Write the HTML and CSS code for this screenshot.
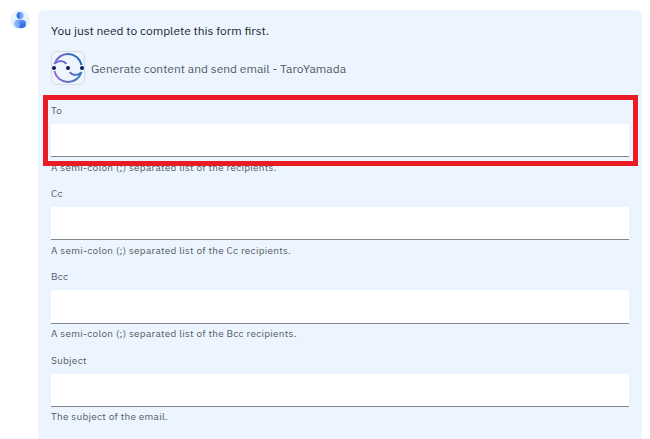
FILE: index.html
```html
<!DOCTYPE html>
<html lang="en">
<head>
<meta charset="utf-8">
<title>Send email</title>
<link rel="stylesheet" href="styles.css">
</head>
<body>
<main class="chat">
  <svg class="avatar" viewBox="0 0 20 20" aria-hidden="true">
    <defs>
      <linearGradient id="light" x1="0" x2="1" y1="0" y2="0"><stop offset="0" stop-color="#a5c8fb"/><stop offset="1" stop-color="#5f98f2"/></linearGradient>
      <linearGradient id="dark" x1="0" x2="0" y1="0" y2="1"><stop offset="0" stop-color="#5b94ef"/><stop offset="1" stop-color="#2460dc"/></linearGradient>
    </defs>
    <circle cx="10" cy="10" r="10" fill="#e9f3ff"/>
    <path fill="#3c78dd" d="M10 2A3.500 3.500 0 0 0 10 9Z"/>
    <path fill="#76a8f5" d="M10 2A3.500 3.500 0 0 1 10 9Z"/>
    <path fill="url(#light)" d="M10 9.800H8A4 4 0 0 0 8 17.900H10Z"/>
    <path fill="url(#dark)" d="M10 9.800H12A4 4 0 0 1 12 17.900H10Z"/>
  </svg>
  <section class="card">
    <p class="intro">You just need to complete this form first.</p>
    <header class="skill">
      <svg class="skill-icon" viewBox="0 0 34 34" aria-hidden="true">
        <defs>
          <linearGradient id="top" x1="0" x2="1" y1="0" y2="0"><stop offset="0" stop-color="#7868d5"/><stop offset="1" stop-color="#1767b5"/></linearGradient>
          <linearGradient id="bottom" x1="0" x2="1" y1="0" y2="0"><stop offset="0" stop-color="#8d65d6"/><stop offset="1" stop-color="#3976be"/></linearGradient>
        </defs>
        <rect x=".5" y=".5" width="33" height="33" rx="4.500" fill="#eff5fc" stroke="#d4dde6"/>
        <g fill="none" stroke-width="1.900">
          <path stroke="url(#top)" d="M3.500 13A14 14 0 0 1 30.600 14M3.500 13C6 9.500 12.200 8.800 15.300 12.800"/>
          <path stroke="url(#bottom)" d="M3.400 20A14 14 0 0 0 30.500 21M30.500 21C28 24.500 21.800 25.200 18.700 21.200"/>
        </g>
        <g fill="#081b5a"><circle cx="3" cy="17" r="2"/><circle cx="17" cy="17" r="2"/><circle cx="31" cy="17" r="2"/></g>
      </svg>
      <h1 class="skill-name">Generate content and send email - TaroYamada</h1>
    </header>
    <form class="fields">
      <div class="field highlighted">
        <label class="label" for="to">To</label>
        <input class="input" id="to" type="text">
        <p class="help">A semi-colon (;) separated list of the recipients.</p>
      </div>
      <div class="field">
        <label class="label" for="cc">Cc</label>
        <input class="input" id="cc" type="text">
        <p class="help">A semi-colon (;) separated list of the Cc recipients.</p>
      </div>
      <div class="field">
        <label class="label" for="bcc">Bcc</label>
        <input class="input" id="bcc" type="text">
        <p class="help">A semi-colon (;) separated list of the Bcc recipients.</p>
      </div>
      <div class="field">
        <label class="label" for="subject">Subject</label>
        <input class="input" id="subject" type="text">
        <p class="help">The subject of the email.</p>
      </div>
    </form>
  </section>
</main>
</body>
</html>
```
FILE: styles.css
```css
*, *::after { box-sizing: border-box; }
body {
  margin: 0;
  background: #fff;
  font-family: "IBM Plex Sans", Roboto, "Liberation Sans", sans-serif;
  overflow: hidden;
}
.chat {
  display: flex;
  align-items: flex-start;
  gap: 8px;
  height: 439px;
  padding: 10px 8px 0 10px;
}
.avatar { width: 20px; height: 20px; flex: none; }
.card {
  flex: 1;
  height: 429px;
  padding: 11px 13px 0;
  border-radius: 6px 6px 0 0;
  background: #ecf5ff;
}
.intro {
  margin: 0 0 10px;
  color: #20262d;
  font-size: 12px;
  line-height: 20px;
}
.skill { display: flex; align-items: center; gap: 6px; height: 34px; }
.skill-icon { width: 34px; height: 34px; flex: none; }
.skill-name {
  margin: 2px 0 0;
  color: #535a62;
  font-size: 12px;
  font-weight: 400;
  line-height: 20px;
}
.fields { margin: 0; padding-top: 18px; }
.field {
  position: relative;
  height: 83.2px;
  color: #535a62;
  font-size: 10px;
  line-height: 16px;
  letter-spacing: 0.27px;
}
.label { display: block; height: 16px; margin-bottom: 5px; }
.input {
  display: block;
  width: 100%;
  height: 33.2px;
  padding: 0 10px;
  border: 0;
  border-bottom: 1px solid #81868b;
  border-radius: 0;
  background: #fff;
  outline: 0;
}
.help { margin: 2.4px 0 0; }
.highlighted::after {
  content: "";
  position: absolute;
  top: -8px;
  left: -8px;
  right: -9px;
  height: 71px;
  border: 5px solid #e91c26;
  pointer-events: none;
}
```
